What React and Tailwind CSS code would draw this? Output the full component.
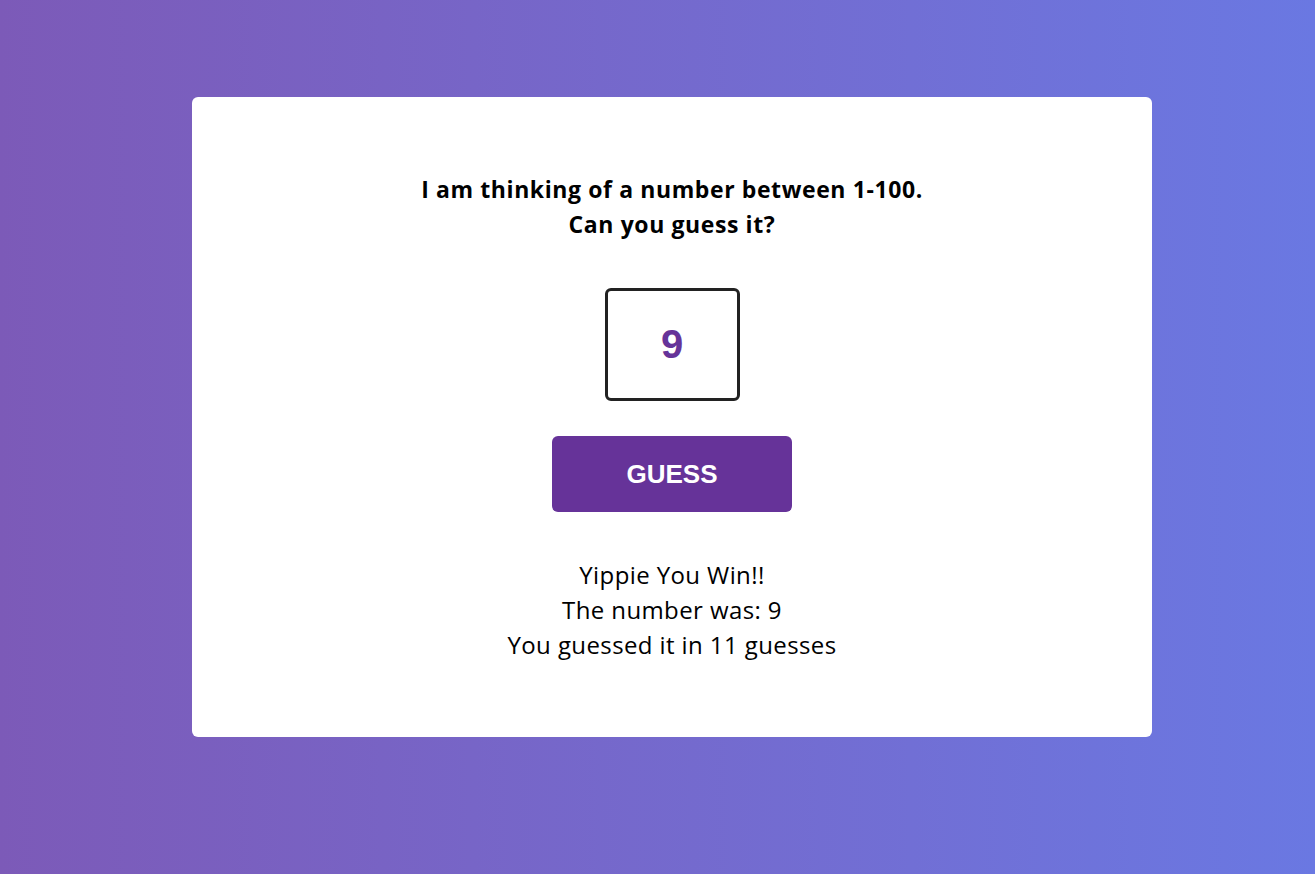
export default function App() {
  return (
    <div className="min-h-screen w-full bg-gradient-to-r from-[#7c5ab8] to-[#6a78e2] flex pl-[192px] pt-[97px] font-['Open_Sans',sans-serif]">
      <div className="w-[960px] h-[640px] bg-white rounded-md flex flex-col items-center justify-center">
        <h1 className="text-[23px] leading-[35px] font-bold text-black text-center tracking-[0.6px]">
          I am thinking of a number between 1-100.
          <br />
          Can you guess it?
        </h1>
        <input
          type="text"
          defaultValue="9"
          className="mt-[46px] w-[135px] h-[113px] border-[3px] border-[#222] rounded-md text-center text-[40px] font-bold text-[#663399] font-['Liberation_Sans',Arial,sans-serif] outline-none"
        />
        <button className="mt-[35px] w-[240px] h-[76px] bg-[#663399] rounded-md text-white text-[26px] font-bold font-['Liberation_Sans',Arial,sans-serif]">
          GUESS
        </button>
        <div className="mt-[45px] text-[24px] leading-[35px] text-black text-center tracking-[0.4px]">
          <p>Yippie You Win!!</p>
          <p>The number was: 9</p>
          <p>You guessed it in 11 guesses</p>
        </div>
      </div>
    </div>
  );
}
